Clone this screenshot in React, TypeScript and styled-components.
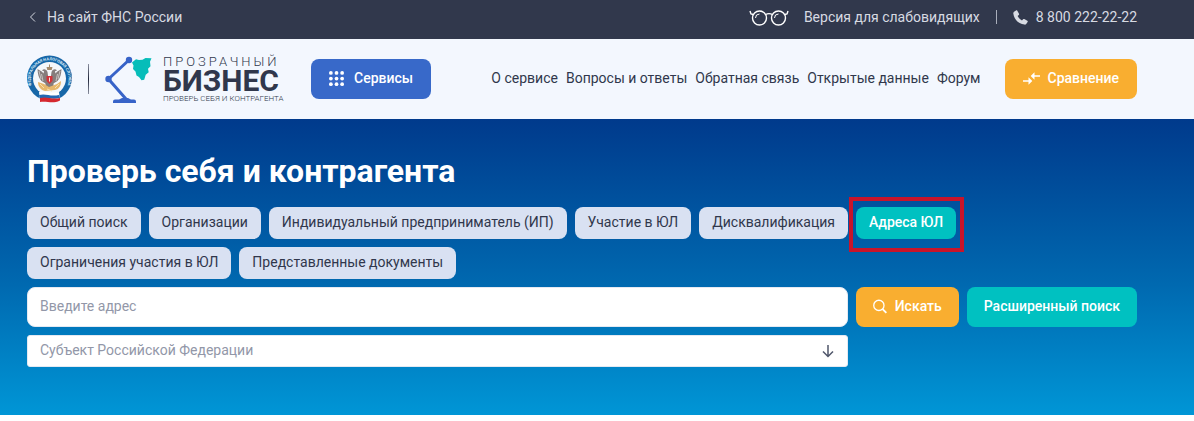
import React from "react";
import styled, { createGlobalStyle, css } from "styled-components";

const GlobalStyle = createGlobalStyle`
  *, *::before, *::after { box-sizing: border-box; }
  body {
    margin: 0;
    background: #fff;
    color: #30374c;
    font: 400 14px/20px Roboto, "Liberation Sans", sans-serif;
  }
  button, input, select { font: inherit; color: inherit; }
`;

const gutter = css`
  padding-left: 27px;
  padding-right: 57px;
`;

const TopBar = styled.div`
  ${gutter}
  display: flex;
  align-items: center;
  justify-content: space-between;
  min-height: 39px;
  padding-bottom: 5px;
  background: #31384c;
  color: #d7dae2;
`;

const TopGroup = styled.div`
  display: flex;
  align-items: center;
`;

const TopLink = styled.a<{ $gap: number }>`
  display: flex;
  align-items: center;
  gap: ${(p) => p.$gap}px;
  color: inherit;
  text-decoration: none;
`;

const TopDivider = styled.span`
  width: 1px;
  height: 14px;
  margin: 0 16px;
  background: #a9aebb;
`;

const Header = styled.header`
  ${gutter}
  display: flex;
  align-items: center;
  height: 80px;
  background: #f3f7fe;
`;

const Brand = styled.a`
  display: flex;
  align-items: center;
  width: 284px;
  color: inherit;
  text-decoration: none;
`;

const BrandDivider = styled.span`
  width: 1px;
  height: 30px;
  margin: 0 16px;
  background: linear-gradient(#8b90a0, #20263a, #8b90a0);
`;

const BrandText = styled.span`
  display: flex;
  flex-direction: column;
  margin-left: 11px;
  padding-top: 2px;
  white-space: nowrap;
`;

const BrandTop = styled.span`
  font-size: 13px;
  line-height: 14px;
  font-weight: 300;
  letter-spacing: 3px;
`;

const BrandName = styled.span`
  font-size: 30px;
  line-height: 24px;
  font-weight: 700;
`;

const BrandTag = styled.span`
  font-size: 8px;
  line-height: 12px;
  font-weight: 300;
`;

const Button = styled.button<{ $tone: "blue" | "amber" | "teal"; $pad?: number; $gap?: number }>`
  display: flex;
  align-items: center;
  justify-content: center;
  gap: ${(p) => p.$gap ?? 8}px;
  height: 40px;
  padding: 0 ${(p) => p.$pad ?? 17}px 2px;
  border: 0;
  border-radius: 8px;
  color: #fff;
  font-weight: 500;
  white-space: nowrap;
  background: ${(p) => ({ blue: "#3869c9", amber: "#f9ae30", teal: "#00c1c1" })[p.$tone]};
`;

const Nav = styled.nav`
  display: flex;
  gap: 8px;
  margin-left: auto;
  margin-right: 24px;
  padding-bottom: 2px;
`;

const NavLink = styled.a`
  color: inherit;
  text-decoration: none;
  white-space: nowrap;
`;

const Hero = styled.main`
  ${gutter}
  padding-top: 32px;
  padding-bottom: 48px;
  background: linear-gradient(#003a8c, #0069b0 56%, #0096d6);
`;

const Title = styled.h1`
  margin: 0 0 16px;
  color: #fff;
  font-size: 32px;
  line-height: 40px;
  font-weight: 700;
`;

const Chips = styled.div`
  display: flex;
  flex-wrap: wrap;
  gap: 8px;
  margin-bottom: 8px;
`;

const ChipSlot = styled.span`
  position: relative;
`;

const Chip = styled.button<{ $active?: boolean }>`
  display: block;
  height: 32px;
  padding: 0 13px 2px;
  border: 0;
  border-radius: 8px;
  background: ${(p) => (p.$active ? "#00c1c1" : "#d9e1f2")};
  color: ${(p) => (p.$active ? "#fff" : "#30374c")};
  font-weight: ${(p) => (p.$active ? 500 : 400)};
  white-space: nowrap;
`;

const Highlight = styled.span`
  position: absolute;
  inset: -10px -8px -13px -7px;
  border: 4px solid #c9142a;
  pointer-events: none;
`;

const SearchForm = styled.form`
  display: grid;
  grid-template-columns: 1fr auto auto;
  gap: 8px;
`;

const AddressInput = styled.input`
  min-width: 0;
  height: 40px;
  padding: 0 12px 2px;
  border: 1px solid #e4e9f2;
  border-radius: 8px;
  background: #fff;
  &::placeholder { color: #9297a8; opacity: 1; }
`;

const SelectBox = styled.div`
  grid-column: 1;
  position: relative;
`;

const RegionSelect = styled.select`
  display: block;
  width: 100%;
  height: 32px;
  padding: 0 40px 2px 12px;
  border: 1px solid #e4e9f2;
  border-radius: 3px;
  background: #fff;
  color: #9297a8;
  appearance: none;
`;

const SelectArrow = styled.svg`
  position: absolute;
  right: 12px;
  top: 8px;
  pointer-events: none;
`;

const Seal = () => (
  <svg width="45" height="48" viewBox="0 0 45 48" aria-hidden="true">
    <circle cx="22.500" cy="23" r="22.500" fill="#1767a8" />
    <circle cx="22.500" cy="23.500" r="16.500" fill="#f5f7fa" />
    <defs>
      <path id="seal-ring" d="M6.500 34.500A19 19 0 1 1 38.500 34.500" />
    </defs>
    <text fontSize="4" fontWeight="700" fill="#d9ecf8">
      <textPath href="#seal-ring" startOffset="50%" textAnchor="middle">ФЕДЕРАЛЬНАЯ НАЛОГОВАЯ СЛУЖБА</textPath>
    </text>
    <g fill="#857d7c">
      <path d="M20.500 17c-1-3-4-3.500-5.500-1.500l2 .8-.5 2.200c-2-3-4-3-6-4.500.3 5 1 9 4 12l5 3 2-5z" />
      <path d="M24.500 17c1-3 4-3.500 5.500-1.500l-2 .8.5 2.200c2-3 4-3 6-4.500-.3 5-1 9-4 12l-5 3-2-5z" />
      <path d="M18.500 21h8v10l-4 4-4-4z" />
    </g>
    <path d="M12 16l2 8M14.500 19l1.500 7M33 16l-2 8M30.500 19l-1.500 7" stroke="#d8d3d0" strokeWidth=".8" />
    <path d="M19.500 12h6l-.8 3h-4.400zM22 9.500h1v3h-1z" fill="#a58a6a" />
    <path d="M11 27l6 2 5 3 8-3 4-3c0 5-2 8-6 9l-10 1c-4-1-7-4-7-9z" fill="#e6b76c" />
    <path d="M13 29l4 4m11 0 4-4m-12 5 5 2" stroke="#f7dfaa" strokeWidth="1" />
    <path d="M19.500 21h6v5l-3 3-3-3z" fill="#d2343b" />
    <path d="M22 22.500h1v4h-1z" fill="#f4e6e0" />
    <path d="M12 37c6-2 10 2 20 0l1 8c-9 3-12-1-20 1z" fill="#fff" />
    <path d="M12 40c7-2 11 2 20 0l1 3c-8 2-13-1-20 1z" fill="#2367b1" />
    <path d="M13 43c7-2 12 2 20 0v2.500c-8 4-13 0-20 1.500z" fill="#d5282f" />
  </svg>
);

const Lamp = () => (
  <svg width="47" height="48" viewBox="0 0 47 48" aria-hidden="true">
    <path d="M24 5 3.500 24 21 44" fill="none" stroke="#3763c8" strokeWidth="3" />
    <circle cx="24" cy="5" r="3.200" fill="#3763c8" />
    <circle cx="3.500" cy="24" r="3.200" fill="#3763c8" />
    <path d="M8 48v-1.500a2 2 0 0 1 2-2h4l3-1.500h6l3 1.500h3a2 2 0 0 1 2 2V48z" fill="#3763c8" />
    <path d="M27 7.500 31 4.300l3 .7 3.500-.3 3-1.700 6 .3-1.500 3.500.5 4.500-2.500 2.500.7 3.500-3 2.500-1.500 5-2.700.5-2.500-3.300-2.500-1.500-1-4-2.500-2.500.5-3.500z" fill="#06bdb9" />
  </svg>
);

const DotsIcon = () => (
  <svg width="15" height="15" viewBox="0 0 16 16" fill="currentColor" aria-hidden="true">
    {[2, 8, 14].map((y) => [2, 8, 14].map((x) => <circle key={`${x}-${y}`} cx={x} cy={y} r="2" />))}
  </svg>
);

const GlassesIcon = () => (
  <svg width="40" height="18" viewBox="0 0 40 18" fill="none" stroke="#fff" strokeWidth="1.400" aria-hidden="true">
    <circle cx="10.500" cy="10" r="7" />
    <circle cx="29.500" cy="10" r="7" />
    <path d="M16.500 6.500c2.300-1.200 4.700-1.200 7 0M4.500 6.500 2 6 1 3M35.500 6.500 38 6l1-3" />
    <path d="M6.500 10a4 4 0 0 1 4-4M25.500 10a4 4 0 0 1 4-4" strokeWidth="1" />
  </svg>
);

const PhoneIcon = () => (
  <svg width="15" height="15" viewBox="0 0 15 15" fill="currentColor" aria-hidden="true">
    <path d="M1 1.800 3 .4c.5-.3 1-.2 1.300.3l1.700 3c.2.500.1.900-.2 1.200L4.600 6c.9 1.900 2.400 3.400 4.400 4.400l1.100-1.200c.3-.3.800-.4 1.200-.2l3 1.700c.5.300.6.800.3 1.300l-1.400 2c-.4.500-1 .7-1.700.6C5.400 13.700 1.100 9.500.3 3.500.2 2.800.5 2.200 1 1.800z" />
  </svg>
);

const CompareIcon = () => (
  <svg width="17" height="14" viewBox="0 0 17 14" fill="none" stroke="currentColor" strokeWidth="1.600" aria-hidden="true">
    <path d="M0 10h7M17 5h-7" />
    <path d="M5.500 6.300 9.300 10l-3.800 3.700zM11.500 1.300 7.700 5l3.800 3.700z" fill="currentColor" stroke="none" />
  </svg>
);

const SearchIcon = () => (
  <svg width="14" height="15" viewBox="0 0 15 15" fill="none" stroke="currentColor" strokeWidth="1.400" aria-hidden="true">
    <circle cx="6.300" cy="6.300" r="5.500" />
    <path d="m10.300 10.300 4 4" strokeWidth="2" />
  </svg>
);

const navItems = ["О сервисе", "Вопросы и ответы", "Обратная связь", "Открытые данные", "Форум"];

const chips = [
  "Общий поиск",
  "Организации",
  "Индивидуальный предприниматель (ИП)",
  "Участие в ЮЛ",
  "Дисквалификация",
  "Адреса ЮЛ",
  "Ограничения участия в ЮЛ",
  "Представленные документы",
];

const activeChip = "Адреса ЮЛ";

export default function App() {
  return (
    <>
      <GlobalStyle />
      <TopBar>
        <TopLink href="#" $gap={8}>
          <svg width="12" height="12" viewBox="0 0 12 12" fill="none" stroke="currentColor" aria-hidden="true">
            <path d="M8 1.500 3.500 6 8 10.500" />
          </svg>
          На сайт ФНС России
        </TopLink>
        <TopGroup>
          <TopLink href="#" $gap={15}>
            <GlassesIcon />
            Версия для слабовидящих
          </TopLink>
          <TopDivider />
          <TopLink href="tel:88002222222" $gap={8}>
            <PhoneIcon />
            8 800 222-22-22
          </TopLink>
        </TopGroup>
      </TopBar>
      <Header>
        <Brand href="#">
          <Seal />
          <BrandDivider />
          <Lamp />
          <BrandText>
            <BrandTop>ПРОЗРАЧНЫЙ</BrandTop>
            <BrandName>БИЗНЕС</BrandName>
            <BrandTag>ПРОВЕРЬ СЕБЯ И КОНТРАГЕНТА</BrandTag>
          </BrandText>
        </Brand>
        <Button type="button" $tone="blue" $pad={18} $gap={10}>
          <DotsIcon />
          Сервисы
        </Button>
        <Nav>
          {navItems.map((item) => (
            <NavLink key={item} href="#">{item}</NavLink>
          ))}
        </Nav>
        <Button type="button" $tone="amber" $pad={18}>
          <CompareIcon />
          Сравнение
        </Button>
      </Header>
      <Hero>
        <Title>Проверь себя и контрагента</Title>
        <Chips>
          {chips.map((name) => (
            <ChipSlot key={name}>
              <Chip type="button" $active={name === activeChip} aria-pressed={name === activeChip}>{name}</Chip>
              {name === activeChip && <Highlight />}
            </ChipSlot>
          ))}
        </Chips>
        <SearchForm onSubmit={(e) => e.preventDefault()}>
          <AddressInput type="text" placeholder="Введите адрес" aria-label="Адрес" />
          <Button type="submit" $tone="amber">
            <SearchIcon />
            Искать
          </Button>
          <Button type="button" $tone="teal">Расширенный поиск</Button>
          <SelectBox>
            <RegionSelect aria-label="Субъект Российской Федерации" defaultValue="">
              <option value="">Субъект Российской Федерации</option>
            </RegionSelect>
            <SelectArrow width="16" height="16" viewBox="0 0 16 16" fill="none" stroke="#50576b" strokeWidth="1.500" aria-hidden="true">
              <path d="M8 2v11M3 8.500l5 5 5-5" />
            </SelectArrow>
          </SelectBox>
        </SearchForm>
      </Hero>
    </>
  );
}
